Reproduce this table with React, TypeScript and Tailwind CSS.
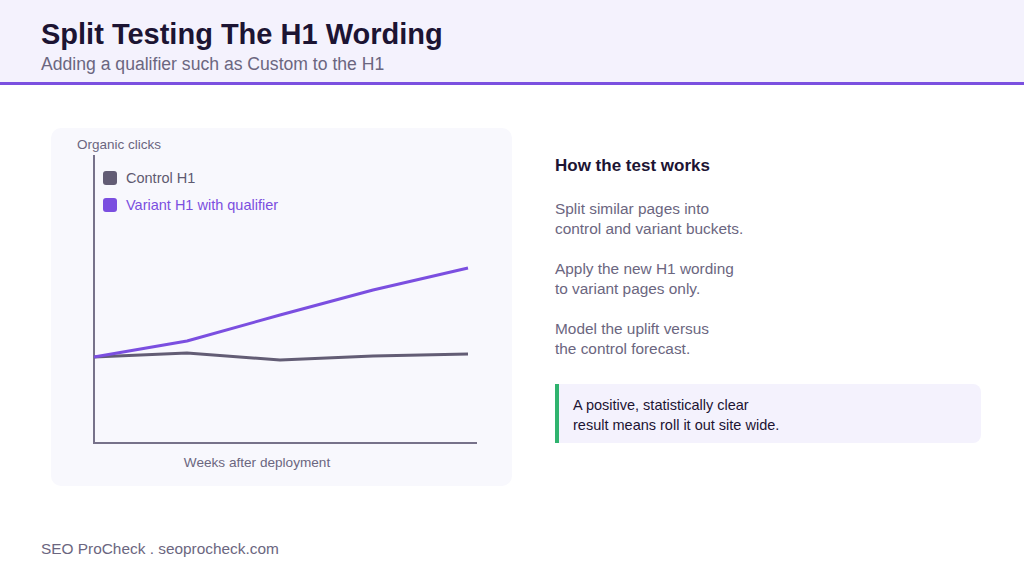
import React from "react";

export default function App() {
  const control = "1,202 94,198 187,205 280,201 375,199";
  const variant = "1,202 94,186 187,160 280,135 375,113";
  return (
    <div
      className="w-[1024px] h-[576px] bg-white flex flex-col overflow-hidden"
      style={{ fontFamily: '"Liberation Sans", Arial, sans-serif' }}
    >
      <header className="h-[85px] bg-[#f4f2fd] border-b-[3px] border-[#7b50e0] pl-[41px] pt-[18px]">
        <h1 className="text-[29px] leading-[32px] font-bold text-[#1c1433]">
          Split Testing The H1 Wording
        </h1>
        <p className="text-[17.6px] leading-[22px] text-[#6b6680] mt-[3px]">
          Adding a qualifier such as Custom to the H1
        </p>
      </header>

      <main className="flex pl-[51px] pt-[43px]">
        <section className="w-[461px] h-[358px] rounded-[10px] bg-[#f8f8fd] pl-[26px] pt-[9px]">
          <div className="text-[13.5px] leading-[16px] text-[#6b6680]">Organic clicks</div>
          <div className="relative ml-[16px] mt-[2px] w-[386px] h-[290px]">
            <svg className="absolute inset-0" width="386" height="290" viewBox="0 0 386 290">
              <line x1="1" y1="0" x2="1" y2="289" stroke="#77728a" strokeWidth="2" />
              <line x1="0" y1="288" x2="384" y2="288" stroke="#77728a" strokeWidth="2" />
              <polyline points={control} fill="none" stroke="#635d75" strokeWidth="3" strokeLinejoin="round" />
              <polyline points={variant} fill="none" stroke="#7b4fe0" strokeWidth="3" strokeLinejoin="round" />
            </svg>
            <div className="absolute left-[10px] top-[16px] flex flex-col gap-[13px]">
              <div className="flex items-center gap-[9px]">
                <span className="w-[14px] h-[14px] rounded-[3px] bg-[#635d75]" />
                <span className="text-[14.5px] leading-[14px] text-[#5f5a70]">Control H1</span>
              </div>
              <div className="flex items-center gap-[9px]">
                <span className="w-[14px] h-[14px] rounded-[3px] bg-[#7b4fe0]" />
                <span className="text-[14.5px] leading-[14px] text-[#7b4fe0]">Variant H1 with qualifier</span>
              </div>
            </div>
          </div>
          <div className="w-[360px] mt-[10px] text-center text-[13.6px] leading-[16px] text-[#6b6680]">
            Weeks after deployment
          </div>
        </section>

        <section className="ml-[43px] pt-[28px] w-[426px]">
          <h2 className="text-[17px] leading-[20px] font-bold text-[#1c1433]">How the test works</h2>
          <div className="mt-[23px] flex flex-col gap-[20px] text-[15.4px] leading-[20px] text-[#6b6680]">
            <p>
              Split similar pages into
              <br />
              control and variant buckets.
            </p>
            <p>
              Apply the new H1 wording
              <br />
              to variant pages only.
            </p>
            <p>
              Model the uplift versus
              <br />
              the control forecast.
            </p>
          </div>
          <div className="mt-[25px] h-[59px] bg-[#f4f2fd] border-l-[4px] border-[#2fb36e] rounded-r-[8px] pl-[14px] pt-[11px] text-[14.5px] leading-[20px] text-[#1c1433]">
            A positive, statistically clear
            <br />
            result means roll it out site wide.
          </div>
        </section>
      </main>

      <footer className="mt-auto pl-[41px] pb-[19px] text-[15.4px] leading-[16px] text-[#6b6680]">
        SEO ProCheck . seoprocheck.com
      </footer>
    </div>
  );
}
